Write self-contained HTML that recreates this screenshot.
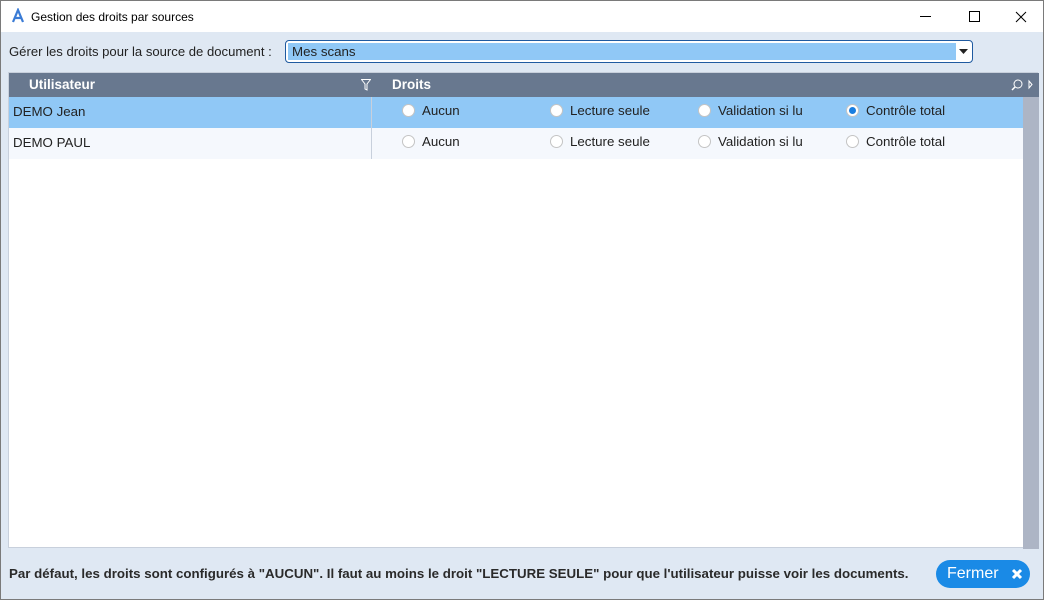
<!DOCTYPE html><html><head><meta charset="utf-8"><style>
*{margin:0;padding:0;box-sizing:border-box}
body{width:1044px;height:600px;position:relative;overflow:hidden;font-family:"Liberation Sans",sans-serif;font-size:13.3px;color:#222;background:#dfe8f3}
.win{position:absolute;inset:0;border:1px solid #7a7a7a}
.title{position:absolute;left:0;top:0;width:1044px;height:32px;background:#fff;border:1px solid #7a7a7a;border-bottom:none}
.title span{position:absolute;left:30px;top:9px;font-size:12px;color:#000}
.ab{position:absolute}
.combo{position:absolute;left:285px;top:40px;width:688px;height:23px;border:1px solid #1f5aa0;border-radius:4px;background:#fff}
.combo .f{position:absolute;left:2px;top:2px;right:16px;bottom:2px;background:#90c8f6}
.grid{position:absolute;left:8px;top:72px;width:1030px;height:476px;background:#fff;border:1px solid #c8d0dc}
.hdr{position:absolute;left:0;top:0;width:1030px;height:24px;background:#68788f;color:#fff;font-weight:bold;font-size:13.5px}
.row{position:absolute;left:0;width:1014px;height:31px}
.sb{position:absolute;left:1014px;top:24px;width:16px;height:452px;background:#adb5c5}
.r{position:absolute;width:13px;height:13px;border-radius:50%;background:#fff;border:1px solid #c4c4c4}
.r.on::after{content:"";position:absolute;left:2px;top:2px;width:7px;height:7px;border-radius:50%;background:#1a7ee0}
.btn{position:absolute;left:936px;top:560px;width:94px;height:28px;border-radius:14px;background:#1a8ae6;color:#fff;font-size:16px}
</style></head><body>
<div class="win"></div>
<div class="title">
<svg style="position:absolute;left:9px;top:7px" width="16" height="16"><path d="M3 14 L8 2 L13 14 M5 10 H12" stroke="#3a7bd5" stroke-width="2.2" fill="none"/></svg>
<span>Gestion des droits par sources</span>
<svg style="position:absolute;left:919px;top:15px" width="12" height="2"><rect width="11" height="1" fill="#000"/></svg>
<svg style="position:absolute;left:968px;top:10px" width="12" height="12"><rect x="0.5" y="0.5" width="10" height="10" stroke="#000" fill="none"/></svg>
<svg style="position:absolute;left:1014px;top:10px" width="12" height="12"><path d="M1 1L11 11M11 1L1 11" stroke="#000"/></svg>
</div>
<div class="ab" style="left:9px;top:44px;font-size:13.1px">Gérer les droits pour la source de document :</div>
<div class="combo"><div class="f"></div><span class="ab" style="left:6px;top:3px">Mes scans</span>
<svg style="position:absolute;right:4px;top:8px" width="9" height="6"><path d="M0 0H9L4.5 5Z" fill="#222"/></svg></div>
<div class="grid">
<div class="hdr"><span class="ab" style="left:20px;top:4px">Utilisateur</span>
<svg style="position:absolute;left:352px;top:6px" width="10" height="12"><path d="M0.5 0.5H9.5L6 5V11L4 10V5Z" stroke="#fff" fill="none"/></svg>
<span class="ab" style="left:383px;top:4px">Droits</span>
<svg style="position:absolute;left:1002px;top:6px" width="22" height="12"><circle cx="7" cy="5" r="4" stroke="#fff" fill="none"/><path d="M4 8L1 11" stroke="#fff" stroke-width="1.5"/><path d="M18 2V9L21 5.5Z" stroke="#fff" fill="none"/></svg></div>
<div class="row" style="top:24px;background:#90c8f6"></div>
<div class="row" style="top:55px;background:#f5f8fd"></div>
<div style="position:absolute;left:362px;top:24px;width:1px;height:62px;background:#c8d0dc"></div>
<span class="ab" style="left:4px;top:31px">DEMO Jean</span>
<span class="ab" style="left:4px;top:62px">DEMO PAUL</span>
<div class="sb"></div>
</div>
<div class="r" style="left:402px;top:104px"></div><span class="ab" style="left:422px;top:103px">Aucun</span>
<div class="r" style="left:550px;top:104px"></div><span class="ab" style="left:570px;top:103px">Lecture seule</span>
<div class="r" style="left:698px;top:104px"></div><span class="ab" style="left:718px;top:103px">Validation si lu</span>
<div class="r on" style="left:846px;top:104px"></div><span class="ab" style="left:866px;top:103px">Contrôle total</span>
<div class="r" style="left:402px;top:135px"></div><span class="ab" style="left:422px;top:134px">Aucun</span>
<div class="r" style="left:550px;top:135px"></div><span class="ab" style="left:570px;top:134px">Lecture seule</span>
<div class="r" style="left:698px;top:135px"></div><span class="ab" style="left:718px;top:134px">Validation si lu</span>
<div class="r" style="left:846px;top:135px"></div><span class="ab" style="left:866px;top:134px">Contrôle total</span>
<div class="ab" style="left:9px;top:566px;font-weight:bold;font-size:13.3px;color:#2a2a2a">Par défaut, les droits sont configurés à "AUCUN". Il faut au moins le droit "LECTURE SEULE" pour que l'utilisateur puisse voir les documents.</div>
<div class="btn"><span class="ab" style="left:11px;top:5px;font-size:16px">Fermer</span>
<svg style="position:absolute;left:75px;top:8px" width="12" height="12"><path d="M2 2L10 10M10 2L2 10" stroke="#fff" stroke-width="3"/></svg></div>
</body></html>
